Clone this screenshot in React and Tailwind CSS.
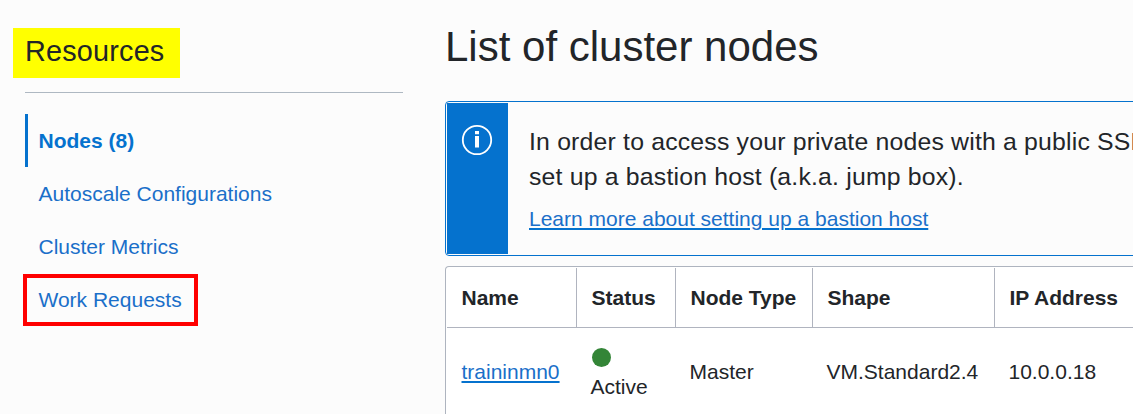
const columns = [
  { label: "Name", cell: "w-[129px] pl-[14.5px]" },
  { label: "Status", cell: "w-[99px] pl-[14.5px]" },
  { label: "Node Type", cell: "w-[137px] pl-[14.5px]" },
  { label: "Shape", cell: "w-[182px] pl-[14.5px]" },
  { label: "IP Address", cell: "w-[200px] pl-[14.5px]" },
];

const links = ["Autoscale Configurations", "Cluster Metrics", "Work Requests"];

function Sidebar() {
  return (
    <aside className="w-[403px] shrink-0 pt-7">
      <h2 className="ml-[13px] h-[50px] w-[167px] bg-[#ffff00] pl-3 text-[28.8px] leading-[46px] tracking-[0.2px]">
        Resources
      </h2>
      <div className="ml-[25px] mt-[14px] border-t border-[#aeb8c2]" />
      <nav className="ml-[25px] mt-[21px] text-[21px] leading-[53px] text-[#1a6fc9]">
        <a className="block h-[53px] border-l-3 border-[#0572ce] pl-[10.5px] font-bold text-[#0572ce]">
          Nodes (8)
        </a>
        {links.map((label) => (
          <a key={label} className="relative block h-[53px] pl-[13.5px]">
            {label}
            {label === "Work Requests" && (
              <span className="absolute -left-[2px] top-[1px] h-[52px] w-[175px] border-4 border-[#ff0000]" />
            )}
          </a>
        ))}
      </nav>
    </aside>
  );
}

function Notice() {
  return (
    <section className="mt-[27px] flex h-[155px] rounded border border-[#0572ce] p-px">
      <div className="flex w-[61px] shrink-0 justify-center bg-[#0572ce] pr-px pt-[21px]">
        <svg width="32" height="32" viewBox="0 0 32 32" fill="none">
          <circle cx="16" cy="16" r="14.2" stroke="white" strokeWidth="1.8" />
          <path d="M14 7h4v3.3h-4zM14 12h4v11.5h-4z" fill="white" />
        </svg>
      </div>
      <div className="whitespace-nowrap pl-[21px] pt-[21px]">
        <p className="text-[24.8px] leading-[35px] tracking-[0.19px]">
          In order to access your private nodes with a public SSH key,
          <br />
          set up a bastion host (a.k.a. jump box).
        </p>
        <a className="mt-[13px] block text-[21px] leading-6 text-[#1a6fc9] underline decoration-[#0572ce] decoration-2 underline-offset-[2px]">
          Learn more about setting up a bastion host
        </a>
      </div>
    </section>
  );
}

function NodesTable() {
  return (
    <section className="mt-[10px] h-[200px] rounded-t border-x border-t border-[#aeb4bf] bg-white px-px pt-px text-[21px]">
      <div className="flex h-[60px] border-b border-[#b0b4bf] font-bold leading-[60px]">
        {columns.map(({ label, cell }, i) => (
          <div
            key={label}
            className={`${cell} shrink-0 whitespace-nowrap ${i ? "border-l border-[#b0b4bf]" : ""}`}
          >
            {label}
          </div>
        ))}
      </div>
      <div className="flex h-[88px] items-center">
        <div className="w-[129px] shrink-0 pl-[14.5px]">
          <a className="text-[#1a6fc9] underline decoration-[#0572ce] decoration-2 underline-offset-[2px]">traininmn0</a>
        </div>
        <div className="w-[99px] shrink-0 pl-[14.5px]">
          <div className="ml-[1px] mt-[5px] size-[19px] rounded-full bg-[#338537]" />
          <div className="mt-[5px] leading-[30px]">Active</div>
        </div>
        <div className="w-[137px] shrink-0 pl-[14.5px]">Master</div>
        <div className="w-[182px] shrink-0 pl-[14.5px]">VM.Standard2.4</div>
        <div className="w-[200px] shrink-0 pl-[14.5px]">10.0.0.18</div>
      </div>
    </section>
  );
}

export default function App() {
  return (
    <div className="flex h-[414px] w-[1133px] overflow-hidden bg-[#fcfcfc] font-['Liberation_Sans',Arial,sans-serif] text-[#222529]">
      <Sidebar />
      <main className="ml-[42px] w-[900px] shrink-0 pt-5">
        <h1 className="h-[54px] text-[42px] leading-[54px]">List of cluster nodes</h1>
        <Notice />
        <NodesTable />
      </main>
    </div>
  );
}
